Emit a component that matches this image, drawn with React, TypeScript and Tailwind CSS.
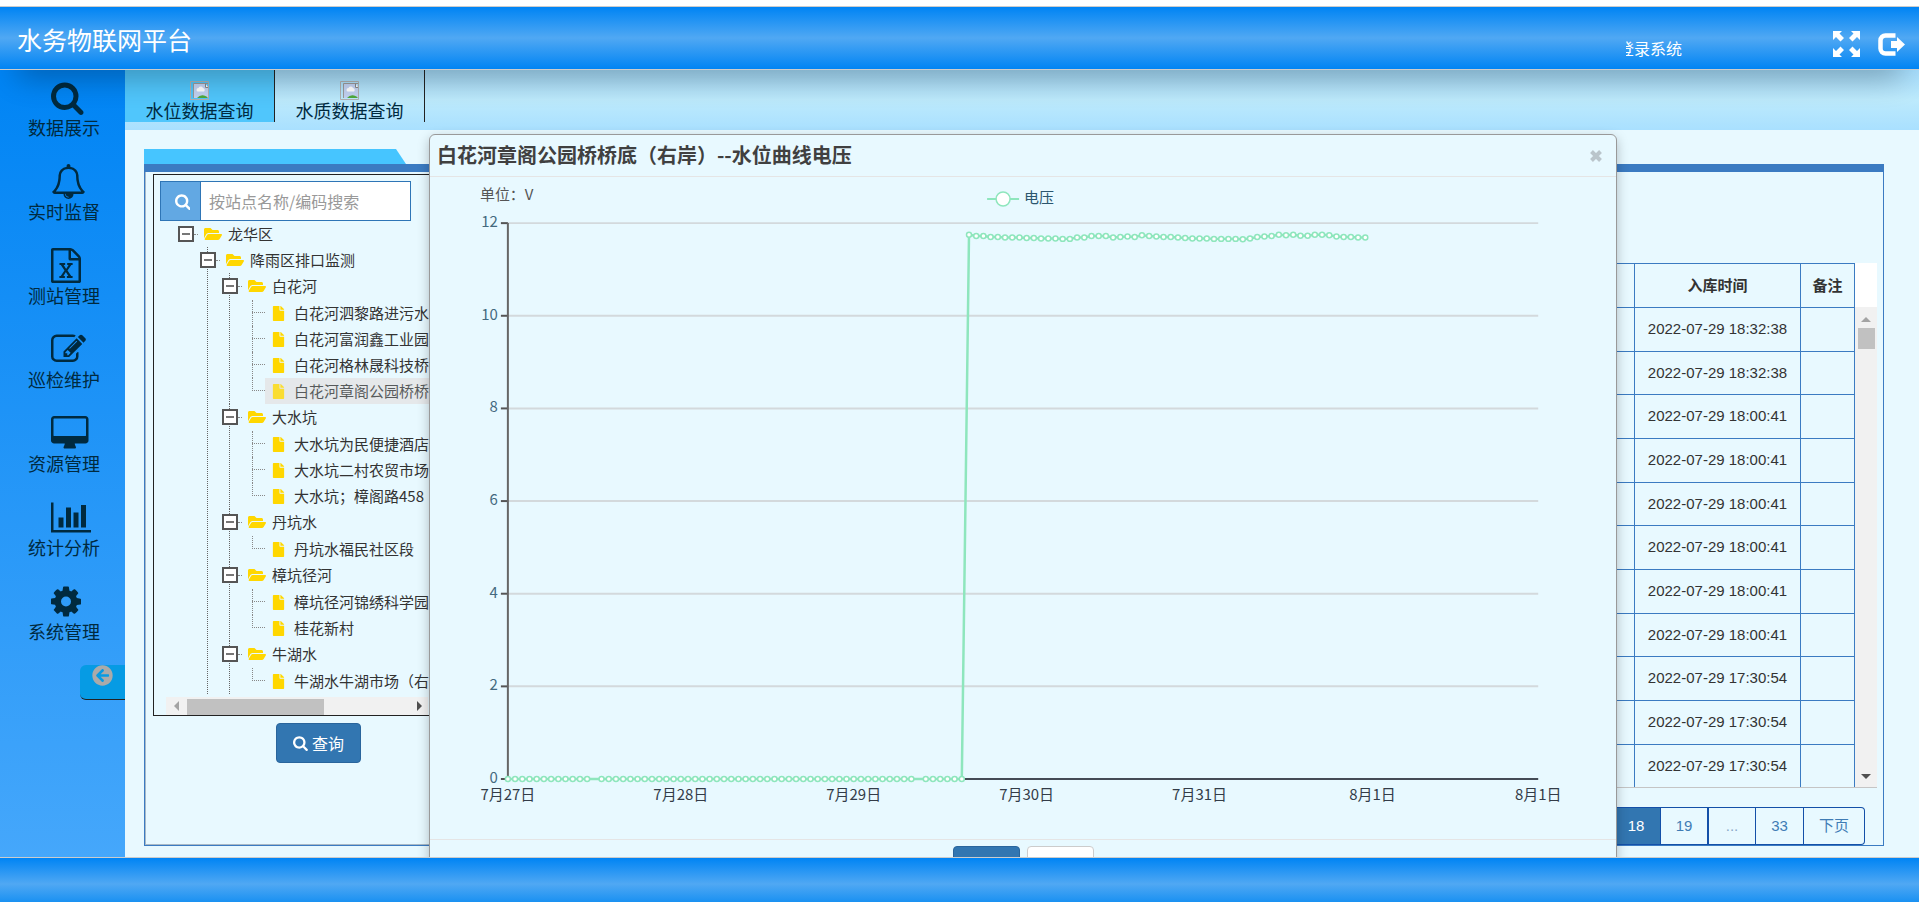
import { FaArrowCircleLeft, FaFile, FaFolderOpen } from "react-icons/fa";

type Glyph = { box: string; d: string };

type TreeNode = { name: string; selected?: boolean; children?: TreeNode[] };

const SEARCH: Glyph = {
  box: "64 0 1664 1792",
  d: "M1216 832q0-185-131.500-316.500t-316.500-131.500-316.500 131.500-131.500 316.500 131.500 316.500 316.500 131.500 316.500-131.500 131.500-316.500zm512 832q0 52-38 90t-90 38q-54 0-90-38l-343-342q-179 124-399 124-143 0-273.500-55.500t-225-150-150-225-55.500-273.500 55.500-273.500 150-225 225-150 273.500-55.500 273.500 55.500 225 150 150 225 55.500 273.500q0 220-124 399l343 343q37 37 37 90z",
};

const BELL: Glyph = {
  box: "0 0 1792 1792",
  d: "M912 1696q0-16-16-16-59 0-101.500-42.500t-42.500-101.500q0-16-16-16t-16 16q0 73 51.500 124.500t124.500 51.500q16 0 16-16zm-666-288h1300q-266-300-266-832 0-51-24-105t-69-103-121.500-80.500-169.500-31.500-169.500 31.500-121.500 80.500-69 103-24 105q0 532-266 832zm1482 0q0 52-38 90t-90 38h-448q0 106-75 181t-181 75-181-75-75-181h-448q-52 0-90-38t-38-90q50-42 91-88t85-119.500 74.500-158.500 50-206 19.500-260q0-152 117-282.500t307-158.500q-8-19-8-39 0-40 28-68t68-28 68 28 28 68q0 20-8 39 190 28 307 158.500t117 282.500q0 139 19.500 260t50 206 74.500 158.500 85 119.500 91 88z",
};

const EXCEL: Glyph = {
  box: "128 0 1536 1792",
  d: "M1596 380q28 28 48 76t20 88v1152q0 40-28 68t-68 28h-1344q-40 0-68-28t-28-68v-1600q0-40 28-68t68-28h896q40 0 88 20t76 48zm-444-244v376h376q-10-29-22-41l-313-313q-12-12-41-22zm384 1528v-1024h-416q-40 0-68-28t-28-68v-416h-768v1536h1280zm-979-234v106h281v-106h-75l103-161q5-7 10-16.500t7.500-13.500 3.500-4h2q1 4 5 10 2 4 4.500 7.500t6 8 6.500 8.500l107 161h-76v106h291v-106h-68l-192-273 195-282h67v-107h-279v107h74l-103 159q-4 7-10 16.500t-9 13.500l-2 3h-2q-1-4-5-10-6-11-17-23l-106-159h76v-107h-290v107h68l189 272-194 283h-68z",
};

const EDIT: Glyph = {
  box: "0 0 1792 1792",
  d: "M888 1184l116-116-152-152-116 116v56h96v96h56zm440-720q-16-16-33 1l-350 350q-17 17-1 33t33-1l350-350q17-17 1-33zm80 594v190q0 119-84.500 203.500t-203.500 84.500h-832q-119 0-203.500-84.500t-84.500-203.500v-832q0-119 84.500-203.500t203.500-84.500h832q63 0 117 25 15 7 18 23 3 17-9 29l-49 49q-14 14-32 8-23-6-45-6h-832q-66 0-113 47t-47 113v832q0 66 47 113t113 47h832q66 0 113-47t47-113v-126q0-13 9-22l64-64q15-15 35-7t20 29zm-96-738l288 288-672 672h-288v-288zm444 132l-92 92-288-288 92-92q28-28 68-28t68 28l152 152q28 28 28 68t-28 68z",
};

const DESKTOP: Glyph = {
  box: "-64 0 1920 1792",
  d: "M1728 992v-832q0-13-9.500-22.500t-22.500-9.500h-1600q-13 0-22.500 9.500t-9.500 22.500v832q0 13 9.500 22.500t22.500 9.500h1600q13 0 22.500-9.500t9.500-22.500zm128-832v1088q0 66-47 113t-113 47h-544q0 37 16 77.500t32 71 16 43.500q0 26-19 45t-45 19h-512q-26 0-45-19t-19-45q0-14 16-44t32-70 16-78h-544q-66 0-113-47t-47-113v-1088q0-66 47-113t113-47h1600q66 0 113 47t47 113z",
};

const BARS: Glyph = {
  box: "0 0 2048 1792",
  d: "M640 896v512h-256v-512h256zm384-512v1024h-256v-1024h256zm1024 1152v128h-2048v-1536h128v1408h1920zm-640-896v768h-256v-768h256zm384-384v1152h-256v-1152h256z",
};

const COG: Glyph = {
  box: "128 0 1536 1792",
  d: "M1152 896q0-106-75-181t-181-75-181 75-75 181 75 181 181 75 181-75 75-181zm512-109v222q0 12-8 23t-20 13l-185 28q-19 54-39 91 35 50 107 138 10 12 10 25t-9 23q-27 37-99 108t-94 71q-12 0-26-9l-138-108q-44 23-91 38-16 136-29 186-7 28-36 28h-222q-14 0-24.500-8.500t-11.500-21.500l-28-184q-49-16-90-37l-141 107q-10 9-25 9-14 0-25-11-126-114-165-168-7-10-7-23 0-12 8-23 15-21 51-66.500t54-70.500q-27-50-41-99l-183-27q-13-2-21-12.500t-8-23.500v-222q0-12 8-23t19-13l186-28q14-46 39-92-40-57-107-138-10-12-10-24 0-10 9-23 26-36 98.500-107.500t94.500-71.500q13 0 26 10l138 107q44-23 91-38 16-136 29-186 7-28 36-28h222q14 0 24.500 8.500t11.500 21.500l28 184q49 16 90 37l142-107q9-9 24-9 13 0 25 10 129 119 165 170 7 8 7 22 0 12-8 23-15 21-51 66.500t-54 70.500q26 50 41 98l183 28q13 2 21 12.500t8 23.500z",
};

const NAV = [
  { label: "数据展示", glyph: SEARCH },
  { label: "实时监督", glyph: BELL },
  { label: "测站管理", glyph: EXCEL },
  { label: "巡检维护", glyph: EDIT },
  { label: "资源管理", glyph: DESKTOP },
  { label: "统计分析", glyph: BARS },
  { label: "系统管理", glyph: COG },
];

const STATIONS: TreeNode = {
  name: "龙华区",
  children: [
    {
      name: "降雨区排口监测",
      children: [
        {
          name: "白花河",
          children: [
            { name: "白花河泗黎路进污水" },
            { name: "白花河富润鑫工业园" },
            { name: "白花河格林晟科技桥" },
            { name: "白花河章阁公园桥桥", selected: true },
          ],
        },
        {
          name: "大水坑",
          children: [
            { name: "大水坑为民便捷酒店" },
            { name: "大水坑二村农贸市场" },
            { name: "大水坑；樟阁路458" },
          ],
        },
        { name: "丹坑水", children: [{ name: "丹坑水福民社区段" }] },
        { name: "樟坑径河", children: [{ name: "樟坑径河锦绣科学园" }, { name: "桂花新村" }] },
        { name: "牛湖水", children: [{ name: "牛湖水牛湖市场（右" }] },
      ],
    },
  ],
};

const TIMES = [
  "2022-07-29 18:32:38",
  "2022-07-29 18:32:38",
  "2022-07-29 18:00:41",
  "2022-07-29 18:00:41",
  "2022-07-29 18:00:41",
  "2022-07-29 18:00:41",
  "2022-07-29 18:00:41",
  "2022-07-29 18:00:41",
  "2022-07-29 17:30:54",
  "2022-07-29 17:30:54",
  "2022-07-29 17:30:54",
];

// Hourly voltage from the moment the sensor came back, hour 64 onwards.
const FIRST_LIVE_HOUR = 64;
const MISSING_HOURS = [12, 57];
const VOLTS = [
  11.75, 11.72, 11.72, 11.7, 11.7, 11.69, 11.69, 11.69, 11.68, 11.68, 11.67, 11.67, 11.67, 11.66,
  11.66, 11.69, 11.69, 11.72, 11.72, 11.72, 11.69, 11.7, 11.71, 11.7, 11.74, 11.72, 11.71, 11.7,
  11.7, 11.69, 11.68, 11.67, 11.67, 11.67, 11.66, 11.66, 11.66, 11.66, 11.65, 11.67, 11.7, 11.71,
  11.72, 11.75, 11.74, 11.75, 11.73, 11.73, 11.75, 11.75, 11.74, 11.71, 11.7, 11.7, 11.69, 11.69,
];

const X0 = 78;
const X1 = 1110;
const Y0 = 603;
const HOURS = 143;
const px = (hour: number) => X0 + (hour * (X1 - X0)) / HOURS;
const py = (volt: number) => Y0 - volt * 46.4;

const POINTS = [
  ...Array.from({ length: FIRST_LIVE_HOUR }, (_, h) => ({ h, v: 0 })).filter((p) => !MISSING_HOURS.includes(p.h)),
  ...VOLTS.map((v, i) => ({ h: FIRST_LIVE_HOUR + i, v })),
];

const X_LABELS = [
  { h: 0, text: "7月27日" },
  { h: 24, text: "7月28日" },
  { h: 48, text: "7月29日" },
  { h: 72, text: "7月30日" },
  { h: 96, text: "7月31日" },
  { h: 120, text: "8月1日" },
  { h: 143, text: "8月1日" },
];

export default function App() {
  return (
    <div className="flex h-screen flex-col overflow-hidden bg-white pt-1.5 font-['Noto_Sans_CJK_SC',sans-serif] text-[#333]">
      <TopBar />
      <div className="flex min-h-0 flex-1">
        <Sidebar />
        <main className="relative flex min-w-0 flex-1 flex-col overflow-hidden bg-[#e8f9ff]">
          <Tabs />
          <div className="flex min-h-0 flex-1 flex-col pt-[19px] pr-[35px] pb-[11px] pl-[19px]">
            <div className="h-[15px] w-[262px] shrink-0 bg-[#46c5ff] [clip-path:polygon(0_0,252px_0,100%_100%,0_100%)]" />
            <div className="flex min-h-0 flex-1 border border-t-8 border-[#3b7bc2]">
              <StationPanel />
              <Records />
            </div>
          </div>
          <ChartModal />
        </main>
      </div>
      <footer className="h-[45px] shrink-0 border-t border-[#ccc] bg-[linear-gradient(#0084f4,#50a8f3_59%,#1a91f2)]" />
    </div>
  );
}

function Icon({ glyph, className }: { glyph: Glyph; className: string }) {
  return (
    <svg viewBox={glyph.box} className={className} fill="currentColor" aria-hidden="true">
      <path d={glyph.d} />
    </svg>
  );
}

function TopBar() {
  return (
    <header className="z-10 flex h-16 shrink-0 items-center border-y border-[#ccc] bg-[linear-gradient(#0084f4,#50a8f3_50%,#0084f4)] pr-3.5 pl-[17px] text-white shadow-[0_25px_30px_-18px_rgba(0,0,0,0.3)]">
      <h1 className="pt-1 text-[25px]">水务物联网平台</h1>
      <div className="mt-5 mr-[151px] ml-auto flex w-14 justify-end overflow-hidden text-base whitespace-nowrap">
        登录系统
      </div>
      <div className="flex items-center gap-[18px] pt-3">
        <button aria-label="全屏">
          <svg viewBox="0 0 27 26" className="h-[26px] w-[27px]" fill="currentColor">
            <path d="M0 0h9L6.500 2.500l4.500 4.500-3.500 3.500L3 6 0 9z" />
            <path d="M27 0h-9l2.500 2.500L16 7l3.500 3.500L24 6l3 3z" />
            <path d="M0 26h9l-2.500-2.500L11 19l-3.500-3.500L3 20l-3-3z" />
            <path d="M27 26h-9l2.500-2.500L16 19l3.500-3.500L24 20l3-3z" />
          </svg>
        </button>
        <button aria-label="退出">
          <svg viewBox="0 0 27 23" className="h-[23px] w-[27px]">
            <path d="M17.500 2.500H7.500A5 5 0 0 0 2.500 7.500v8A5 5 0 0 0 7.500 20.500h10" fill="none" stroke="currentColor" strokeWidth="4.500" />
            <path d="M13 8h6V4l8 7.500L19 19v-4h-6z" fill="currentColor" />
          </svg>
        </button>
      </div>
    </header>
  );
}

function Sidebar() {
  return (
    <aside className="flex w-[125px] shrink-0 flex-col bg-[linear-gradient(#0084f4,#45a7fb)] text-[#002a3f]">
      <nav>
        {NAV.map((item) => (
          <a key={item.label} href="#" className="block h-[84px] px-7 pt-2.5">
            <Icon glyph={item.glyph} className="ml-[23px] h-[35px] w-auto" />
            <span className="block text-lg/6 whitespace-nowrap">{item.label}</span>
          </a>
        ))}
      </nav>
      <button
        aria-label="收起菜单"
        className="mt-[7px] flex h-[35px] w-[45px] justify-center self-end rounded-l-md border-b border-[#222] bg-[#069be4] text-[#aaa]"
      >
        <FaArrowCircleLeft className="size-[21px]" />
      </button>
    </aside>
  );
}

function Tabs() {
  return (
    <nav className="flex h-[60px] shrink-0 bg-[linear-gradient(#a5dcfb,#bdeafc_50%,#a9e0ff)] text-lg/5 text-[#002a3f]">
      <a href="#" className="flex h-[52px] w-[150px] flex-col items-center border-r border-[#222] bg-[#50c6fc] pt-[11px]">
        <BrokenImage />
        水位数据查询
      </a>
      <a href="#" className="flex h-[52px] w-[150px] flex-col items-center border-r border-[#222] pt-[11px]">
        <BrokenImage />
        水质数据查询
      </a>
    </nav>
  );
}

function BrokenImage() {
  return (
    <svg viewBox="0 0 19 19" className="size-[19px] shrink-0" aria-hidden="true">
      <path d="M.5.500h18v18H.5z" fill="none" stroke="#b0b0b0" />
      <path d="M3.500 17V2.500H15L18 6v11z" fill="#c3d2f2" />
      <path d="M3.500 17V2.500H18" fill="none" stroke="#999" />
      <path d="M15.500 2.500v4H18" fill="#fff" stroke="#888" />
      <path d="M6.500 9a2 2 0 0 1 2-2 2.500 2.500 0 0 1 4.500 0 2 2 0 0 1 1 3.500H8A1.500 1.500 0 0 1 6.500 9z" fill="#fff" />
      <path d="M7 17q3-3.500 7-2.500 3 .5 4 2.500z" fill="#4faa3c" />
    </svg>
  );
}

function StationPanel() {
  return (
    <section className="w-[340px] shrink-0 pt-0.5 pl-2 shadow-[inset_1px_-1px_0_#a9b9c6]">
      <div className="flex h-[542px] w-[331px] flex-col border border-[#222]">
        <div className="mt-1.5 ml-1.5 flex h-10 w-[251px] shrink-0 border border-[#2e75b6] bg-white">
          <button aria-label="搜索" className="flex w-10 shrink-0 items-center justify-center border-r border-[#2e75b6] bg-[#62a8e3] pl-1 text-white">
            <Icon glyph={SEARCH} className="h-[17px] w-auto" />
          </button>
          <input
            type="text"
            aria-label="按站点名称/编码搜索"
            placeholder="按站点名称/编码搜索"
            className="min-w-0 flex-1 px-2 text-base outline-none placeholder:text-[#999]"
          />
        </div>
        <ul className="min-h-0 flex-1 overflow-hidden pl-6 text-[15px] whitespace-nowrap">
          <TreeItem node={STATIONS} root />
        </ul>
        <div className="ml-3 flex h-[18px] w-[262px] shrink-0 items-center bg-[#f1f1f1]">
          <span className="ml-2 border-y-5 border-r-5 border-y-transparent border-r-[#a3a3a3]" />
          <span className="ml-2 h-4 w-[137px] self-end bg-[#c1c1c1]" />
          <span className="mr-1.5 ml-auto border-y-5 border-l-5 border-y-transparent border-l-[#505050]" />
        </div>
      </div>
      <div className="mt-[7px] flex w-[331px] justify-center">
        <button className="flex h-10 w-[85px] items-center justify-center gap-1 rounded-sm border border-[#2a659c] bg-[#3276b1] text-base text-white">
          <Icon glyph={SEARCH} className="h-4 w-auto" />
          查询
        </button>
      </div>
    </section>
  );
}

function TreeItem({ node, root, last }: { node: TreeNode; root?: boolean; last?: boolean }) {
  if (!node.children) {
    return (
      <li className="relative flex h-[26px]">
        <span className={`absolute left-[7px] border-l border-dotted border-[#888] ${last ? "h-[13px]" : "h-[26px]"}`} />
        <span className="ml-[7px] h-[13px] w-[13px] shrink-0 border-b border-dotted border-[#888]" />
        <span className={`flex shrink-0 items-center gap-2 pl-1.5 ${node.selected ? "bg-[#e5e5e5] opacity-80" : ""}`}>
          <FaFile className="size-[15px] shrink-0 text-[#ffd700]" />
          {node.name}
        </span>
      </li>
    );
  }
  const leaves = !node.children[0].children;
  return (
    <li className="relative">
      {!root && <span className="absolute top-0 bottom-0 left-[7px] border-l border-dotted border-[#666]" />}
      <div className="relative flex h-[26px] items-center">
        <span className="flex size-4 items-center justify-center border-2 border-[#555] bg-white">
          <span className="h-0.5 w-2 bg-[#777]" />
        </span>
        <span className="w-1 border-b border-dotted border-[#888]" />
        <FaFolderOpen className="mx-1.5 size-[18px] text-[#ffd700]" />
        {node.name}
      </div>
      <ul className={leaves ? "mt-px pl-[23px]" : "pl-[22px]"}>
        {node.children.map((child, i) => (
          <TreeItem key={child.name} node={child} last={i === node.children!.length - 1} />
        ))}
      </ul>
    </li>
  );
}

function Records() {
  return (
    <section className="flex min-w-0 flex-1 flex-col pt-[91px] pr-1.5">
      <div className="flex border-b border-[#c5c5c5]">
        <table className="h-[524px] min-w-0 flex-1 table-fixed border-collapse border border-b-0 border-[#3b7bc2] text-center text-[15px]">
          <thead>
            <tr className="h-11">
              <th className="border border-[#3b7bc2]" />
              <th className="w-[166px] border border-[#3b7bc2] font-bold">入库时间</th>
              <th className="w-[54px] border border-[#3b7bc2] font-bold">备注</th>
            </tr>
          </thead>
          <tbody className="font-['Liberation_Sans','Noto_Sans_CJK_SC',sans-serif]">
            {TIMES.map((time, i) => (
              <tr key={i}>
                <td className="border border-b-0 border-[#3b7bc2]" />
                <td className="border border-b-0 border-[#3b7bc2]">{time}</td>
                <td className="border border-b-0 border-[#3b7bc2]" />
              </tr>
            ))}
          </tbody>
        </table>
        <div className="flex w-[22px] shrink-0 flex-col items-center bg-[#f1f1f1]">
          <span className="h-11 w-full bg-white" />
          <span className="mt-2.5 border-x-5 border-b-5 border-x-transparent border-b-[#a3a3a3]" />
          <span className="mt-1.5 h-[21px] w-[17px] bg-[#c1c1c1]" />
          <span className="mt-auto mb-2 border-x-5 border-t-5 border-x-transparent border-t-[#505050]" />
        </div>
      </div>
      <nav className="mt-[19px] mr-3 flex h-[39px] justify-end font-['Liberation_Sans','Noto_Sans_CJK_SC',sans-serif] text-[15px] text-[#3f7cb5] *:flex *:items-center *:justify-center *:border-y *:border-r *:border-[#1450a8]">
        <a href="#" aria-current="page" className="w-[49px] bg-[#3276b1] text-white">18</a>
        <a href="#" className="w-[47px]">19</a>
        <span className="w-12 border-l text-[#8aa9c8]">...</span>
        <a href="#" className="w-12">33</a>
        <a href="#" className="w-[61px] rounded-r">下页</a>
      </nav>
    </section>
  );
}

function ChartModal() {
  return (
    <div className="absolute inset-0 flex items-start justify-center pt-16 pl-0.5">
      <div
        role="dialog"
        aria-labelledby="chart-title"
        className="w-[66.3%] rounded-md border border-[#999] bg-[#e8f9ff] shadow-[0_4px_12px_rgba(0,0,0,0.25)]"
      >
        <div className="flex h-[42px] items-center justify-between border-b border-[#e5e5e5] pr-3.5 pl-[7px]">
          <h2 id="chart-title" className="pb-0.5 text-xl font-bold text-[#404040]">
            白花河章阁公园桥桥底（右岸）--水位曲线电压
          </h2>
          <button aria-label="关闭">
            <svg viewBox="0 0 12 12" className="size-3" stroke="#bac5cb" strokeWidth="4">
              <path d="M1.500 1.500l9 9M10.500 1.500l-9 9" />
            </svg>
          </button>
        </div>
        <VoltageChart />
        <div className="flex h-[70px] justify-center gap-[7px] border-t border-[#e5e5e5] pt-1.5">
          <button aria-label="确定" className="h-10 w-[67px] rounded border border-[#2a659c] bg-[#3276b1]" />
          <button aria-label="取消" className="h-10 w-[67px] rounded border border-[#ccc] bg-white" />
        </div>
      </div>
    </div>
  );
}

function VoltageChart() {
  return (
    <svg viewBox="0 0 1188 663" className="block w-full" fontSize="15">
      <text x="50" y="23" fill="#555">单位：V</text>
      <path d="M558 22h32" stroke="#8ee6bd" strokeWidth="2" />
      <circle cx="574" cy="22" r="7" fill="#fff" stroke="#8ee6bd" strokeWidth="1.500" />
      <text x="595" y="26" fill="#2b566e">电压</text>

      {[0, 2, 4, 6, 8, 10, 12].map((v) => (
        <g key={v}>
          {v > 0 && <path d={`M${X0} ${py(v)}H${X1}`} stroke="#d3d9dc" strokeWidth="2" />}
          <path d={`M${X0 - 7} ${py(v)}h7`} stroke="#555" strokeWidth="2" />
          <text x={X0 - 10} y={py(v) + 4} textAnchor="end" fill="#44697e">{v}</text>
        </g>
      ))}
      <path d={`M${X0} ${py(12)}V${Y0}`} stroke="#666" strokeWidth="2" />
      <path d={`M${X0} ${Y0}H${X1}`} stroke="#444b55" strokeWidth="2" />
      {X_LABELS.map((label) => (
        <text key={label.h} x={px(label.h)} y={Y0 + 21} textAnchor="middle" fill="#333c48">{label.text}</text>
      ))}

      <polyline
        points={POINTS.map((p) => `${px(p.h)},${py(p.v)}`).join(" ")}
        fill="none"
        stroke="#8ee6bd"
        strokeWidth="2.500"
      />
      {POINTS.map((p) => (
        <circle key={p.h} cx={px(p.h)} cy={py(p.v)} r="2.500" fill="#fff" stroke="#8ee6bd" strokeWidth="1.500" />
      ))}
    </svg>
  );
}
